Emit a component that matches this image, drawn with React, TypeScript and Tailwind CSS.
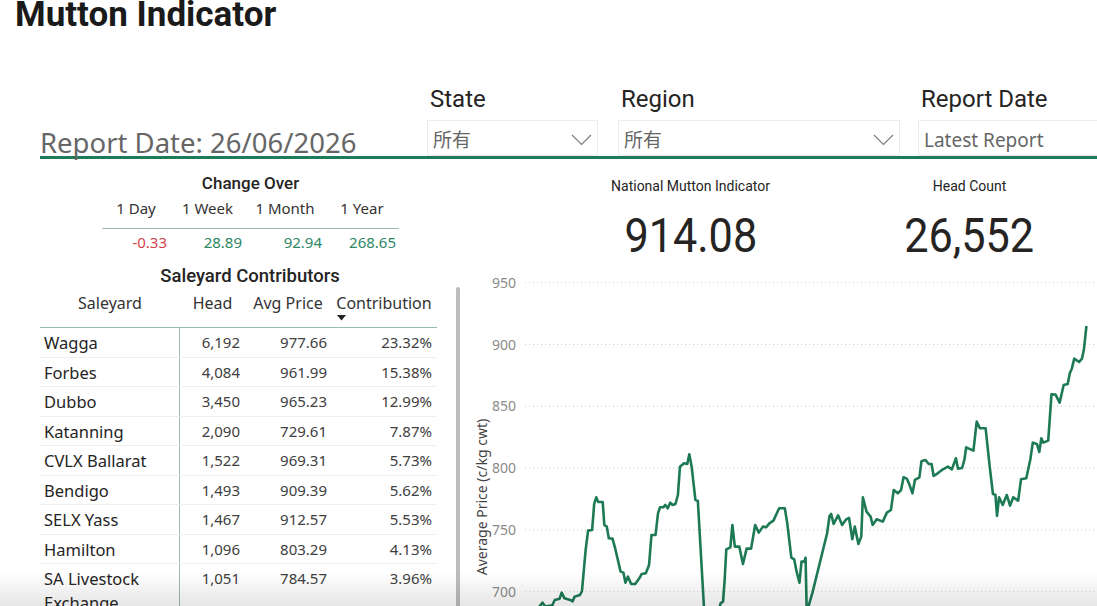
import React from 'react';

const GREEN = '#1d7a55';
const SANS = "font-['Noto_Sans','Noto_Sans_CJK_SC',sans-serif]";
const DIN = "font-['Roboto','Noto_Sans',sans-serif]";

const changes = [
  { label: '1 Day', value: '-0.33', up: false, w: 'w-[68px]' },
  { label: '1 Week', value: '28.89', up: true, w: 'w-[75px]' },
  { label: '1 Month', value: '92.94', up: true, w: 'w-[80px]' },
  { label: '1 Year', value: '268.65', up: true, w: 'w-[74px]' },
];

const saleyards = [
  ['Wagga', '6,192', '977.66', '23.32%'],
  ['Forbes', '4,084', '961.99', '15.38%'],
  ['Dubbo', '3,450', '965.23', '12.99%'],
  ['Katanning', '2,090', '729.61', '7.87%'],
  ['CVLX Ballarat', '1,522', '969.31', '5.73%'],
  ['Bendigo', '1,493', '909.39', '5.62%'],
  ['SELX Yass', '1,467', '912.57', '5.53%'],
  ['Hamilton', '1,096', '803.29', '4.13%'],
  ['SA Livestock Exchange', '1,051', '784.57', '3.96%'],
];

// weekly indicator trace, drawn in a 1546 x 1038 box and scaled into the chart
const trace = [
  [200, 1040], [208, 1028], [215, 1040], [232, 1036], [238, 1020], [250, 1016], [255, 998], [262, 1015], [276, 1020],
  [282, 1024], [287, 1010], [300, 1005], [305, 993], [314, 870], [320, 812], [330, 810], [335, 732], [340, 712],
  [345, 726], [356, 726], [360, 795], [366, 800], [371, 835], [380, 836], [386, 862], [400, 935], [407, 938],
  [412, 968], [418, 950], [426, 972], [436, 972], [446, 955], [452, 942], [462, 940], [470, 915], [476, 825],
  [486, 825], [492, 760], [497, 742], [505, 742], [510, 735], [516, 745], [522, 728], [528, 735], [535, 732],
  [541, 705], [546, 620], [556, 610], [564, 612], [569, 583], [575, 622], [584, 720], [590, 722], [605, 1040],
  [620, 1120], [640, 1060], [646, 1030], [652, 1025], [656, 960], [660, 868], [670, 862], [675, 795], [681, 860],
  [692, 860], [701, 912], [710, 866], [721, 866], [731, 795], [740, 818], [750, 800], [758, 802], [766, 790],
  [776, 782], [790, 745], [804, 745], [810, 790], [820, 893], [827, 898], [833, 935], [840, 968], [845, 905],
  [852, 905], [855, 893], [858, 1060], [862, 1040], [872, 998], [908, 820], [914, 768], [918, 762], [924, 792],
  [935, 766], [945, 795], [955, 778], [962, 774], [966, 805], [970, 838], [976, 800], [985, 852], [992, 830],
  [996, 712], [1005, 755], [1015, 770], [1020, 795], [1030, 778], [1045, 785], [1055, 758], [1065, 750],
  [1072, 690], [1082, 700], [1090, 690], [1096, 652], [1104, 656], [1110, 672], [1118, 700], [1124, 660],
  [1135, 652], [1140, 604], [1150, 600], [1158, 612], [1165, 612], [1170, 648], [1180, 640], [1193, 628],
  [1205, 620], [1215, 628], [1225, 595], [1230, 626], [1240, 624], [1246, 598], [1250, 562], [1268, 572],
  [1276, 485], [1284, 505], [1298, 505], [1308, 620], [1316, 702], [1322, 704], [1326, 768], [1331, 712],
  [1340, 735], [1350, 705], [1358, 737], [1366, 712], [1378, 722], [1385, 658], [1398, 655], [1408, 598],
  [1414, 548], [1424, 552], [1430, 576], [1435, 535], [1440, 548], [1452, 542], [1460, 403], [1470, 404],
  [1480, 428], [1490, 375], [1500, 372], [1505, 340], [1510, 326], [1516, 296], [1528, 306], [1535, 296],
  [1540, 266], [1546, 198],
];

function Chevron() {
  return (
    <svg width="21" height="12" viewBox="0 0 21 12" className="shrink-0">
      <path d="M1 1 L10.5 10.5 L20 1" fill="none" stroke="#7a7a7a" strokeWidth="1.1" />
    </svg>
  );
}

function Filter({ label, value, className, chevron = true }: { label: string, value: string, className: string, chevron?: boolean }) {
  return (
    <div className={`flex flex-col shrink-0 ${className}`}>
      <div className={`${DIN} pl-[3px] text-[24px] leading-[28px] mb-[7px] text-[#252423]`}>{label}</div>
      <div className="h-[36px] border border-[#ececec] flex items-center justify-between pl-[5px] pr-[5px] pt-[4px]">
        <span className={`${SANS} text-[19px] text-[#666]`}>{value}</span>
        {chevron && <Chevron />}
      </div>
    </div>
  );
}

function Kpi({ label, value }: { label: string, value: string }) {
  return (
    <div className="w-[279px] flex flex-col items-center shrink-0">
      <div className={`${DIN} text-[14px] leading-[16px] text-[#252423]`}>{label}</div>
      <div className={`${DIN} inline-block scale-x-90 text-[48px] leading-[48px] mt-[18px] text-[#252423]`}>{value}</div>
    </div>
  );
}

function PriceChart() {
  const ticks = [950, 900, 850, 800, 750, 700];
  return (
    <svg width="637" height="346" className="block">
      {ticks.map((t, i) => {
        const y = 22.7 + i * 61.8;
        return (
          <g key={t}>
            <line x1="67" x2="637" y1={y} y2={y} stroke="#cdcdcd" strokeDasharray="1 3" />
            <text x="58" y={y + 5} textAnchor="end" fontSize="14" fill="#8a8a8a" fontFamily="Noto Sans, sans-serif">{t}</text>
          </g>
        );
      })}
      <text transform="translate(29 237) rotate(-90)" textAnchor="middle" fontSize="14" fill="#444" fontFamily="Noto Sans, sans-serif">
        Average Price (c/kg cwt)
      </text>
      <g transform="scale(0.4065 0.3333)">
        <polyline
          points={trace.map(p => p.join(',')).join(' ')}
          fill="none"
          stroke={GREEN}
          strokeWidth="2.6"
          strokeLinejoin="round"
          vectorEffect="non-scaling-stroke"
        />
      </g>
    </svg>
  );
}

export default function App() {
  return (
    <div className="relative h-[606px] w-full overflow-hidden bg-white">
      <div className="h-[34px] pl-[15px]">
        <div className={`${DIN} relative -top-[2px] text-[35px] leading-[34px] font-bold text-[#1a1a1a]`}>Mutton Indicator</div>
      </div>

      <div className="ml-[40px] h-[125px] flex items-end border-b-[3px] border-[#1f7a57]">
        <div className={`${SANS} w-[387px] shrink-0 text-[27.5px] leading-[30px] -mb-[2px] text-[#666]`}>Report Date: 26/06/2026</div>
        <Filter label="State" value="所有" className="w-[171px]" />
        <Filter label="Region" value="所有" className="w-[282px] ml-[20px]" />
        <Filter label="Report Date" value="Latest Report" className="w-[200px] ml-[18px]" chevron={false} />
      </div>

      <div className="flex pl-[40px]">
        <div className="w-[420px] shrink-0">
          <div className="ml-[62px] w-[297px] mt-[14px]">
            <div className={`${DIN} text-[17px] leading-[20px] text-center font-medium text-[#252423]`}>Change Over</div>
            <div className="flex h-[36px] pt-[5px] border-b border-[#9cb9ae]">
              {changes.map(c => (
                <div key={c.label} className={`${SANS} ${c.w} text-center text-[15px] leading-[20px] text-[#333]`}>{c.label}</div>
              ))}
            </div>
            <div className="flex pt-[3px]">
              {changes.map(c => (
                <div
                  key={c.label}
                  className={`${SANS} ${c.w} text-right pr-[3px] text-[15px] leading-[20px] ${c.up ? 'text-[#2e8765]' : 'text-[#d23f4e]'}`}
                >
                  {c.value}
                </div>
              ))}
            </div>
          </div>

          <div className={`${DIN} mt-[13px] text-[18.5px] leading-[22px] text-center font-medium text-[#252423]`}>Saleyard Contributors</div>
          <div className="flex">
            <div className="w-[397px] shrink-0">
              <div className={`${SANS} flex h-[41px] pt-[5px] border-b border-[#95bcaf] text-[16px] leading-[22px] text-[#333]`}>
                <div className="w-[140px] text-center">Saleyard</div>
                <div className="w-[65px] text-center">Head</div>
                <div className="w-[86px] text-center">Avg Price</div>
                <div className="w-[106px] text-center">
                  <span className="relative inline-block">
                    Contribution
                    <svg width="9" height="6" viewBox="0 0 9 6" className="absolute left-[1px] top-[23px]">
                      <path d="M0 0 H9 L4.5 5.5 Z" fill="#252423" />
                    </svg>
                  </span>
                </div>
              </div>
              {saleyards.map(([name, head, price, share]) => (
                <div key={name} className={`${SANS} flex border-b border-[#efefef]`}>
                  <div className="w-[140px] min-h-[28.5px] pl-[4px] pt-[3px] pr-[4px] border-r border-[#95bcaf] text-[16.5px] leading-[24px] text-[#252423]">
                    {name}
                  </div>
                  <div className="w-[65px] text-right pr-[5px] pt-[4px] text-[15px] leading-[20px] text-[#404040]">{head}</div>
                  <div className="w-[86px] text-right pr-[4px] pt-[4px] text-[15px] leading-[20px] text-[#404040]">{price}</div>
                  <div className="w-[106px] text-right pr-[5px] pt-[4px] text-[15px] leading-[20px] text-[#404040]">{share}</div>
                </div>
              ))}
            </div>
            <div className="ml-[19px] mt-[0px] w-[5px] h-[340px] rounded-full bg-[#bdbdbd]" />
          </div>
        </div>

        <div className="flex-1 min-w-0 -ml-[2px]">
          <div className="flex pl-[93px] pt-[19px]">
            <Kpi label="National Mutton Indicator" value="914.08" />
            <Kpi label="Head Count" value="26,552" />
          </div>
          <PriceChart />
        </div>
      </div>

      <div className="pointer-events-none absolute inset-x-0 bottom-0 h-[34px] bg-linear-to-b from-transparent to-black/10" />
    </div>
  );
}
